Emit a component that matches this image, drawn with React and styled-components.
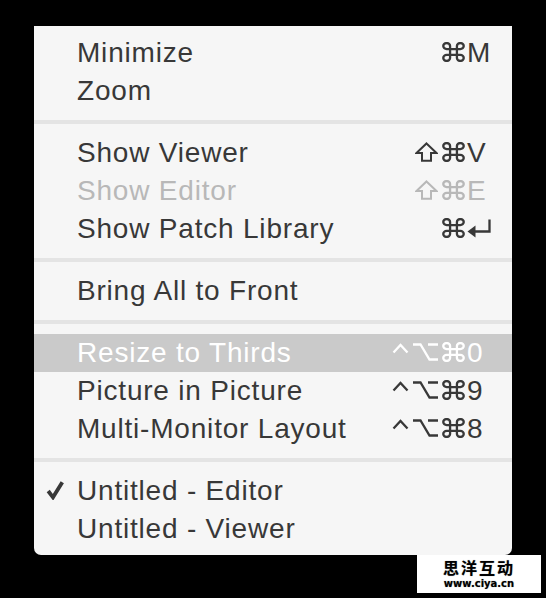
import React from 'react';
import styled, { createGlobalStyle } from 'styled-components';

const GlobalStyle = createGlobalStyle`
  html, body {
    margin: 0;
    padding: 0;
    background: #000;
  }
  body {
    font-family: "Liberation Sans", Arial, Helvetica, sans-serif;
  }
`;

const Screen = styled.div`
  position: relative;
  width: 546px;
  height: 598px;
  box-sizing: border-box;
  padding: 26px 0 0 34px;
  background: #000;
  overflow: hidden;
`;

const Menu = styled.div`
  width: 478px;
  box-sizing: border-box;
  padding: 8px 0 7px;
  background: #f6f6f6;
  border-radius: 0 0 7px 7px;
`;

const Item = styled.div`
  display: grid;
  grid-template-columns: 43px 1fr auto;
  align-items: center;
  height: 38px;
  padding-right: 20px;
  font-size: 28px;
  letter-spacing: 0.8px;
  color: ${(p) => (p.$disabled ? '#b8b8b8' : p.$active ? '#ffffff' : '#383838')};
  background: ${(p) => (p.$active ? '#cacaca' : 'transparent')};
  white-space: nowrap;
`;

const Gutter = styled.div`
  display: flex;
  align-items: center;
  padding-left: 12px;
  padding-bottom: 2px;
`;

const Label = styled.span`
  line-height: 38px;
`;

const Shortcut = styled.div`
  display: flex;
  align-items: center;
`;

const Mods = styled.div`
  display: flex;
  align-items: center;
  justify-content: flex-end;
  gap: 4px;
  padding-bottom: 2px;
`;

const Key = styled.div`
  display: flex;
  align-items: center;
  width: 25px;
  margin-left: 2px;
  letter-spacing: 0;
  line-height: 38px;
`;

const Separator = styled.div`
  height: 4px;
  margin: 10px 0;
  background: #e4e4e4;
`;

const Watermark = styled.div`
  position: absolute;
  right: 5px;
  bottom: 5px;
  width: 124px;
  height: 38px;
  background: #fff;
  display: flex;
  flex-direction: column;
  align-items: center;
  justify-content: center;
  gap: 2px;
  color: #000;
  font-weight: bold;
  text-shadow: 0 0 1px #888;
`;

const WatermarkTitle = styled.div`
  font-family: "Noto Sans CJK SC", sans-serif;
  font-size: 16px;
  line-height: 17px;
  letter-spacing: 2px;
`;

const WatermarkUrl = styled.div`
  font-family: "DejaVu Sans", sans-serif;
  font-size: 10px;
  line-height: 11px;
`;

const Glyph = ({ w, vb, children, stretch }) => (
  <svg
    width={w}
    height={20}
    viewBox={vb}
    preserveAspectRatio={stretch ? 'none' : 'xMidYMid meet'}
    fill="none"
    stroke="currentColor"
    strokeWidth="2.3"
    strokeLinejoin="miter"
  >
    {children}
  </svg>
);

const CtrlIcon = () => (
  <Glyph w={17} vb="0 0 17 20">
    <path d="M1.5 10.5 L8.5 3 L15.5 10.5" />
  </Glyph>
);

const OptIcon = () => (
  <Glyph w={25} vb="0 0 25 20">
    <path d="M0 2.5 H7.5 L16.5 17.5 H25 M15 2.5 H25" />
  </Glyph>
);

const CmdIcon = () => (
  <Glyph w={23} vb="1.9 1.9 20.2 20.2" stretch>
    <path
      vectorEffect="non-scaling-stroke"
      d="M15 6v12a3 3 0 1 0 3-3H6a3 3 0 1 0 3 3V6a3 3 0 1 0-3 3h12a3 3 0 1 0-3-3"
    />
  </Glyph>
);

const ShiftIcon = () => (
  <Glyph w={23} vb="0 0 23 20">
    <path strokeWidth="2" d="M11.5 1.5 L21.5 11 H16 V18.8 H7 V11 H1.5 Z" />
  </Glyph>
);

const ReturnIcon = () => (
  <Glyph w={25} vb="0 0 25 20">
    <path d="M22.5 0.5 V12.5 H7" />
    <path d="M0.5 12.5 L8.5 6.5 V18.5 Z" fill="currentColor" stroke="none" />
  </Glyph>
);

const CheckIcon = () => (
  <Glyph w={18} vb="0 0 18 20">
    <path strokeWidth="3.8" d="M2.2 11 L7 17.3 L16.3 2.2" />
  </Glyph>
);

const modIcons = { ctrl: CtrlIcon, opt: OptIcon, cmd: CmdIcon, shift: ShiftIcon };

const groups = [
  [
    { label: 'Minimize', mods: ['cmd'], key: 'M' },
    { label: 'Zoom' },
  ],
  [
    { label: 'Show Viewer', mods: ['shift', 'cmd'], key: 'V' },
    { label: 'Show Editor', mods: ['shift', 'cmd'], key: 'E', disabled: true },
    { label: 'Show Patch Library', mods: ['cmd'], key: 'return' },
  ],
  [{ label: 'Bring All to Front' }],
  [
    { label: 'Resize to Thirds', mods: ['ctrl', 'opt', 'cmd'], key: '0', active: true },
    { label: 'Picture in Picture', mods: ['ctrl', 'opt', 'cmd'], key: '9' },
    { label: 'Multi-Monitor Layout', mods: ['ctrl', 'opt', 'cmd'], key: '8' },
  ],
  [
    { label: 'Untitled - Editor', checked: true },
    { label: 'Untitled - Viewer' },
  ],
];

function MenuItem({ item }) {
  return (
    <Item $disabled={item.disabled} $active={item.active}>
      <Gutter>{item.checked && <CheckIcon />}</Gutter>
      <Label>{item.label}</Label>
      {item.key && (
        <Shortcut>
          <Mods>
            {item.mods.map((m) => {
              const Icon = modIcons[m];
              return <Icon key={m} />;
            })}
          </Mods>
          <Key>{item.key === 'return' ? <ReturnIcon /> : item.key}</Key>
        </Shortcut>
      )}
    </Item>
  );
}

export default function App() {
  return (
    <>
      <GlobalStyle />
      <Screen>
        <Menu>
          {groups.map((group, i) => (
            <React.Fragment key={i}>
              {i > 0 && <Separator />}
              {group.map((item) => (
                <MenuItem key={item.label} item={item} />
              ))}
            </React.Fragment>
          ))}
        </Menu>
        <Watermark>
          <WatermarkTitle>思洋互动</WatermarkTitle>
          <WatermarkUrl>www.ciya.cn</WatermarkUrl>
        </Watermark>
      </Screen>
    </>
  );
}
